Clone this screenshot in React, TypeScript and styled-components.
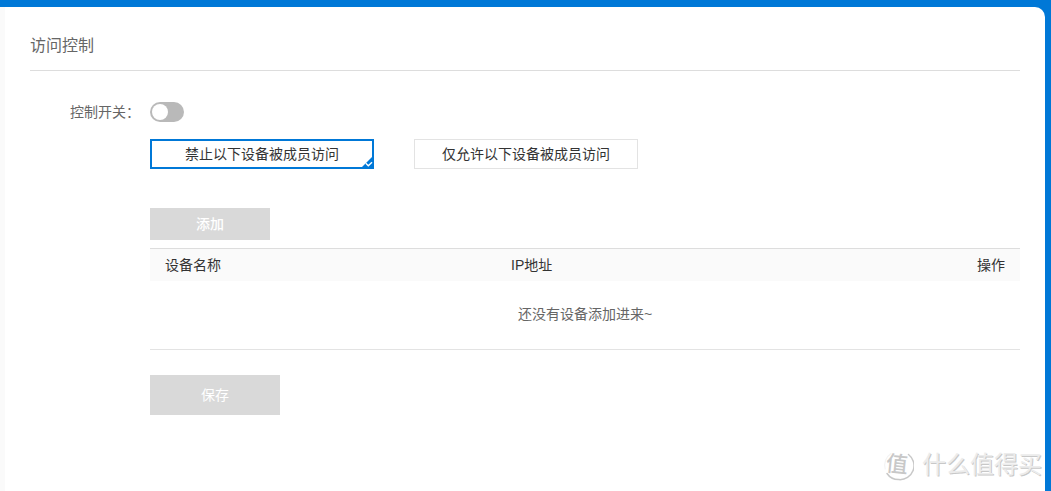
import React, { useState } from "react";
import styled, { createGlobalStyle } from "styled-components";

const BLUE = "#0078d7";

const GlobalStyle = createGlobalStyle`
  *, *::before, *::after { box-sizing: border-box; }
  body {
    margin: 0;
    background: ${BLUE};
    color: #666;
    font: 14px/20px "Liberation Sans", "Noto Sans CJK SC", sans-serif;
  }
`;

const Page = styled.div`
  position: relative;
  min-height: 100vh;
  display: flex;
  padding: 7px 6px 0 0;
  background: ${BLUE};
`;

const Panel = styled.main`
  flex: 1;
  padding: 0 25px;
  background: #fff;
  border-left: 5px solid #fafafa;
  border-top-right-radius: 10px;
`;

const Title = styled.h1`
  margin: 0;
  padding: 27px 0 12px;
  border-bottom: 1px solid #ddd;
  font-size: 16px;
  line-height: 24px;
  font-weight: 400;
`;

const Form = styled.form`
  padding: 31px 0 40px 40px;
`;

const SwitchRow = styled.div`
  display: flex;
  align-items: center;
`;

const SwitchLabel = styled.label`
  width: 80px;
`;

const Switch = styled.input`
  appearance: none;
  display: flex;
  align-items: center;
  width: 34px;
  height: 20px;
  margin: 0;
  padding: 0 2px;
  border-radius: 10px;
  background: #b9b9b9;
  cursor: pointer;

  &::before {
    content: "";
    width: 16px;
    height: 16px;
    border-radius: 50%;
    background: #fff;
  }

  &:checked {
    justify-content: flex-end;
    background: ${BLUE};
  }
`;

const Content = styled.div`
  margin-left: 80px;
`;

const Options = styled.div`
  display: flex;
  flex-wrap: wrap;
  gap: 40px;
  margin-top: 17px;
`;

const Option = styled.label<{ $selected: boolean }>`
  position: relative;
  display: flex;
  align-items: center;
  justify-content: center;
  width: 224px;
  height: 30px;
  border: ${(p) => (p.$selected ? `2px solid ${BLUE}` : "1px solid #e3e3e3")};
  color: #333;
  cursor: pointer;
`;

const HiddenRadio = styled.input`
  position: absolute;
  inset: 0;
  margin: 0;
  opacity: 0;
`;

const Corner = styled.svg`
  position: absolute;
  right: -2px;
  bottom: -2px;
`;

const Button = styled.button<{ $large?: boolean }>`
  display: block;
  width: ${(p) => (p.$large ? 130 : 120)}px;
  height: ${(p) => (p.$large ? 40 : 32)}px;
  margin-top: ${(p) => (p.$large ? 25 : 39)}px;
  padding: 0;
  border: 0;
  background: #d9d9d9;
  color: #fff;
  font: inherit;
  font-weight: ${(p) => (p.$large ? 400 : 500)};
`;

const Table = styled.table`
  width: 100%;
  margin-top: 8px;
  border-top: 1px solid #ddd;
  border-bottom: 1px solid #e3e3e3;
  border-spacing: 0;
  table-layout: fixed;
`;

const HeadCell = styled.th<{ $width: string; $right?: boolean }>`
  width: ${(p) => p.$width};
  height: 32px;
  padding: 0 15px;
  background: #fafafa;
  color: #333;
  font-weight: 400;
  text-align: ${(p) => (p.$right ? "right" : "left")};
`;

const EmptyCell = styled.td`
  height: 68px;
  padding: 0 0 2px;
  text-align: center;
`;

const Watermark = styled.div`
  position: absolute;
  right: 9px;
  bottom: 8px;
  display: flex;
  align-items: center;
  gap: 8px;
  color: #ececec;
  font-size: 24px;
  line-height: 36px;
  text-shadow: 1px 1px 0 #c8c8c8;
  pointer-events: none;
`;

const LogoText = styled.text`
  fill: #c8c8c8;
  font-size: 22px;
  font-weight: 500;
  text-anchor: middle;
  text-shadow: none;
`;

const modes = ["禁止以下设备被成员访问", "仅允许以下设备被成员访问"];

export default function App() {
  const [enabled, setEnabled] = useState(false);
  const [mode, setMode] = useState(0);

  return (
    <>
      <GlobalStyle />
      <Page>
        <Panel>
          <Title>访问控制</Title>
          <Form onSubmit={(e) => e.preventDefault()}>
            <SwitchRow>
              <SwitchLabel htmlFor="access-switch">控制开关：</SwitchLabel>
              <Switch
                id="access-switch"
                type="checkbox"
                role="switch"
                checked={enabled}
                onChange={(e) => setEnabled(e.target.checked)}
              />
            </SwitchRow>
            <Content>
              <Options role="radiogroup">
                {modes.map((text, i) => (
                  <Option key={text} $selected={mode === i}>
                    <HiddenRadio
                      type="radio"
                      name="mode"
                      checked={mode === i}
                      onChange={() => setMode(i)}
                    />
                    {text}
                    {mode === i && (
                      <Corner width="14" height="14" viewBox="0 0 14 14" aria-hidden="true">
                        <path d="M14 0V14H0Z" fill={BLUE} />
                        <path d="M5.8 8.2L8.3 10.7L12 7.2" fill="none" stroke="#fff" strokeWidth="1.4" />
                      </Corner>
                    )}
                  </Option>
                ))}
              </Options>
              <Button type="button" disabled>添加</Button>
              <Table>
                <thead>
                  <tr>
                    <HeadCell $width="346px">设备名称</HeadCell>
                    <HeadCell $width="auto">IP地址</HeadCell>
                    <HeadCell $width="20%" $right>操作</HeadCell>
                  </tr>
                </thead>
                <tbody>
                  <tr>
                    <EmptyCell colSpan={3}>还没有设备添加进来~</EmptyCell>
                  </tr>
                </tbody>
              </Table>
              <Button type="submit" $large disabled>保存</Button>
            </Content>
          </Form>
        </Panel>
        <Watermark>
          <svg width="32" height="32" viewBox="0 0 32 32" aria-hidden="true">
            <g fill="none" strokeLinecap="round">
              <path d="M26.5 5.5A14 14 0 0 1 17 30.6A14 14 0 0 1 5 24.5" stroke="#c8c8c8" strokeWidth="1.5" />
              <path d="M9 4.5A14 14 0 0 0 3.2 20" stroke="#f4f4f4" strokeWidth="1.2" />
            </g>
            <LogoText x="15" y="23" transform="rotate(6 15 15)">值</LogoText>
          </svg>
          <span>什么值得买</span>
        </Watermark>
      </Page>
    </>
  );
}
